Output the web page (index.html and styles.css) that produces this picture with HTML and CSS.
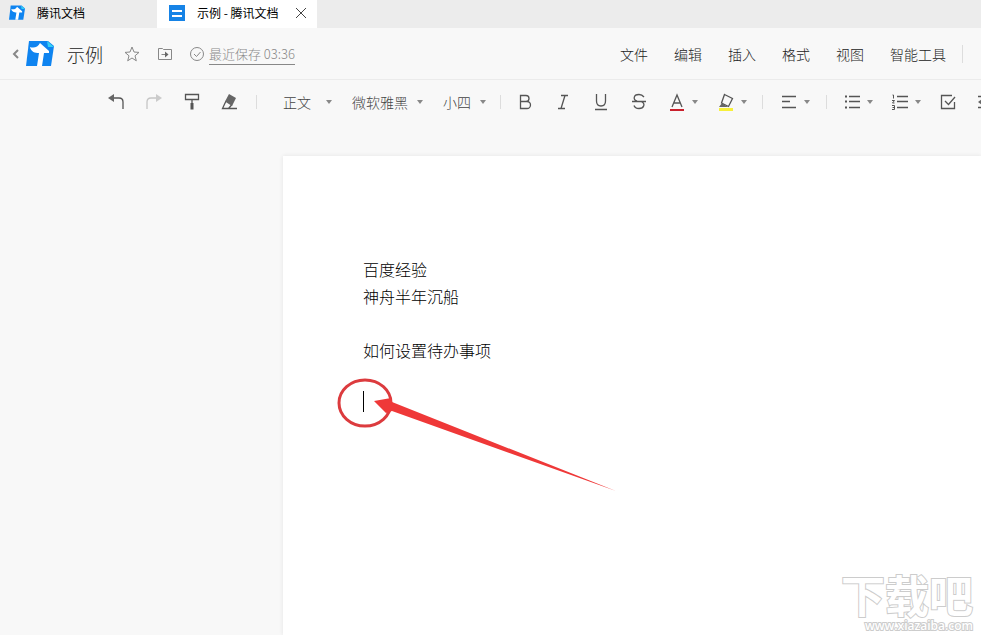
FILE: index.html
```html
<!DOCTYPE html>
<html lang="zh-CN">
<head>
    <meta charset="UTF-8">
    <meta name="viewport" content="width=device-width, initial-scale=1.0">
    <title>示例 - 腾讯文档</title>
    <link rel="stylesheet" href="styles.css">
</head>
<body>
    <svg class="defs" width="0" height="0">
        <symbol id="logo" viewBox="0 0 28 26">
            <path fill="#0f84f0" d="M3 0h19l6 5-3 20H0z"/>
            <path fill="#35d0f5" d="M21 0l7 6h-6z"/>
            <path fill="#fff" d="M4 6c4 1.500 8 0 10-4l9 8v2h-5l-2 13h-5l2-13C9 12 5 11 4 6z"/>
        </symbol>
    </svg>

    <nav class="tabs">
        <a class="tab" href="#"><svg class="tab-icon"><use href="#logo"/></svg>腾讯文档</a>
        <div class="tab active">
            <svg class="tab-icon" viewBox="0 0 16 16"><path fill="#1683e6" d="M0 0h16v16H0z"/><path stroke="#fff" stroke-width="2" d="M3 6h10M3 11h10"/></svg>
            <a href="#">示例 - 腾讯文档</a>
            <button class="close" aria-label="关闭"><svg width="10" height="10" viewBox="0 0 10 10"><path d="M0 0l10 10M10 0L0 10"/></svg></button>
        </div>
    </nav>

    <header class="header">
        <button class="back" aria-label="返回"><svg width="7" height="12" viewBox="0 0 7 12"><path d="M6 2L2 6l4 4" stroke-width="2"/></svg></button>
        <svg class="logo"><use href="#logo"/></svg>
        <h1>示例</h1>
        <button aria-label="收藏"><svg width="16" height="16" viewBox="0 0 16 16"><path d="M8 1l2 5 5 .4-4 3.400 1.300 5L8 12l-4.300 2.800 1.300-5-4-3.400L6 6z"/></svg></button>
        <button class="move" aria-label="移动到"><svg width="14" height="14" viewBox="0 0 14 14"><path d="M.5 1.500h4l1 1h8v10H.5zM3.500 7.500h6"/><path class="fill" d="M7 4.500l3.500 3L7 10.500z"/></svg></button>
        <svg class="saved-icon" width="14" height="14" viewBox="0 0 14 14"><circle cx="7" cy="7" r="6.500"/><path d="M4 7l2.500 2.500L10.500 5"/></svg>
        <a class="saved" href="#">最近保存 03:36</a>
        <nav class="menu">
            <a href="#">文件</a>
            <a href="#">编辑</a>
            <a href="#">插入</a>
            <a href="#">格式</a>
            <a href="#">视图</a>
            <a href="#">智能工具</a>
        </nav>
    </header>

    <div class="toolbar">
        <div class="group">
            <button aria-label="撤销"><svg viewBox="0 0 20 20"><path d="M6 6h7q4 0 4 4v7"/><path class="fill" d="M2 6l6-4v8z"/></svg></button>
            <button class="disabled" aria-label="重做" disabled><svg viewBox="0 0 20 20"><path d="M14 6H7q-4 0-4 4v7"/><path class="fill" d="M18 6l-6-4v8z"/></svg></button>
            <button aria-label="格式刷"><svg viewBox="0 0 20 20"><path d="M3.500 2.500h13v5h-13zM10 7.500v4"/><path d="M10 11v6.500" stroke-width="3"/></svg></button>
            <button aria-label="清除格式"><svg viewBox="0 0 20 20"><path d="M6 9l-3.500 7.500h6l3.500-4M8 16.500h9"/><path class="fill" d="M9 2l7 4-4 8-7-4.500z"/></svg></button>
        </div>
        <div class="group selects">
            <label class="select"><select class="style" aria-label="样式"><option>正文</option></select></label>
            <label class="select"><select aria-label="字体"><option>微软雅黑</option></select></label>
            <label class="select"><select aria-label="字号"><option>小四</option></select></label>
        </div>
        <div class="group format">
            <button aria-label="粗体"><svg viewBox="0 0 20 20"><path d="M5.500 3.500H11a3 3 0 0 1 0 6H5.500zM5.500 9.500H12a3.500 3.500 0 0 1 0 7H5.500z"/></svg></button>
            <button aria-label="斜体"><svg viewBox="0 0 20 20"><path d="M8 3.500h7M5 16.500h7M12 3.500l-4 13"/></svg></button>
            <button aria-label="下划线"><svg viewBox="0 0 20 20"><path d="M5.500 2v7q0 5 4.500 5t4.500-5V2M4 17.500h12"/></svg></button>
            <button aria-label="删除线"><svg viewBox="0 0 20 20"><path d="M15 5q-2-2.500-5-2.500C4 2.500 4 8 8 9M3 9.500h14M12 9.500c5 2 3 7-2 7q-4 0-5-3"/></svg></button>
            <button class="drop" aria-label="文字颜色"><svg viewBox="0 0 20 20"><path d="M5 15l5-12 5 12M7 11h6"/><path class="red" d="M3 17h14v2H3z"/></svg></button>
            <button class="drop" aria-label="突出显示"><svg viewBox="0 0 20 20"><path class="yellow" d="M3 16h14v3H3z"/><path d="M8.500 2.500l8 4-4 8-7-3.500z"/><path class="fill" d="M6 11l6 4H3z"/></svg></button>
        </div>
        <div class="group">
            <button class="drop" aria-label="对齐"><svg viewBox="0 0 20 20"><path d="M3 4.500h14M3 9.500h8M3 15.500h14"/></svg></button>
        </div>
        <div class="group lists">
            <button class="drop" aria-label="项目符号"><svg viewBox="0 0 20 20"><path d="M7 4.500h11M7 9.500h11M7 15.500h11"/><path d="M3 4.500h2M3 9.500h2M3 15.500h2" stroke-width="2"/></svg></button>
            <button class="drop" aria-label="编号"><svg viewBox="0 0 20 20"><path d="M7 4.500h11M7 9.500h11M7 15.500h11"/><path stroke-width="1" d="M2.500 3h1v3.500M2 8.500h2.500l-2 2.500h2M2 13.500h2.500v4H2M2.500 15.500h2"/></svg></button>
            <button aria-label="待办事项"><svg viewBox="0 0 20 20"><path d="M14 3.500H3.500v13h13V10M7 9l3.500 3.500L17 5"/></svg></button>
            <button aria-label="增加缩进"><svg viewBox="0 0 20 20"><path d="M3 4.500h14M9 9.500h8M3 15.500h14"/><path class="fill" d="M3 10l4-3v6z"/></svg></button>
        </div>
    </div>

    <main class="workspace">
        <article class="page">
            <p>百度经验</p>
            <p>神舟半年沉船</p>
            <p><br></p>
            <p>如何设置待办事项</p>
            <p class="current"><span class="caret"></span></p>
            <svg class="pointer" width="284" height="120" viewBox="0 0 284 120">
                <ellipse cx="29" cy="27" rx="26" ry="23"/>
                <path d="M38 25l17-3 1 4 224 89L56 35l-6 2z"/>
            </svg>
        </article>
    </main>

    <div class="watermark">
        <span class="name">下载吧</span>
        <span class="site">www.xiazaiba.com</span>
    </div>
</body>
</html>
```
FILE: styles.css
```css
* {
    box-sizing: border-box;
}
body {
    display: flex;
    flex-direction: column;
    min-height: 100vh;
    margin: 0;
    overflow: hidden;
    background: #f8f8f8;
    color: #222;
    font-family: "Noto Sans CJK SC", sans-serif;
    font-size: 14px;
    font-weight: 300;
}
a {
    color: inherit;
    text-decoration: none;
}
button {
    display: flex;
    align-items: center;
    flex: none;
    padding: 0;
    border: none;
    background: none;
    cursor: pointer;
}
svg {
    flex: none;
    fill: none;
    stroke: #888;
}
.defs {
    position: absolute;
}

/* browser tabs */
.tabs {
    display: flex;
    height: 28px;
    background: #ececec;
    color: #000;
    font-size: 12px;
    font-weight: 400;
}
.tab {
    display: flex;
    align-items: center;
    gap: 12px;
    width: 157px;
    padding: 0 9px 3px;
}
.tab.active {
    width: 160px;
    padding: 0 11px 3px 12px;
    background: #fff;
}
.tab-icon {
    width: 16px;
    height: 16px;
    stroke: none;
}
.close {
    margin-left: auto;
}
.close svg {
    stroke: #444;
}

/* title and menu */
.header {
    display: flex;
    align-items: center;
    height: 52px;
    padding: 1px 18px 0 12px;
    border-bottom: 1px solid #ebebeb;
}
.logo {
    width: 28px;
    height: 26px;
    margin-left: 7px;
    stroke: none;
}
h1 {
    margin: 0 21px 0 13px;
    color: #222;
    font-size: 18px;
    font-weight: 300;
    line-height: 24px;
}
.move {
    margin: 0 18px;
}
.saved {
    margin-left: 5px;
    border-bottom: 1px solid #888;
    color: #888;
    font-size: 13px;
    line-height: 20px;
}
.menu {
    display: flex;
    gap: 26px;
    margin-left: auto;
    padding-right: 16px;
    border-right: 1px solid #ddd;
    line-height: 18px;
}

/* toolbar */
.toolbar {
    display: flex;
    align-items: center;
    height: 44px;
    padding-left: 106px;
}
.toolbar svg {
    width: 20px;
    height: 20px;
    stroke: #555;
    stroke-width: 1.3;
}
.group {
    display: flex;
    align-items: center;
    flex: none;
    gap: 18px;
    height: 14px;
    padding: 0 16px;
    border-right: 1px solid #ddd;
}
.group:first-child {
    padding-left: 0;
}
.selects {
    gap: 20px;
    padding: 0 14px 0 26px;
}
.format {
    padding: 0 15px 0 14px;
}
.lists {
    gap: 17px;
    padding-left: 15px;
}
.select {
    display: flex;
    align-items: center;
    gap: 9px;
}
.select select {
    appearance: none;
    padding: 0;
    border: none;
    background: none;
    color: #444;
    font: inherit;
    line-height: 20px;
}
.select .style {
    width: 34px;
}
.drop {
    gap: 5px;
}
.select::after, .drop::after {
    content: "";
    border: 3px solid transparent;
    border-top: 4px solid #888;
    border-bottom: none;
}
.toolbar .disabled svg {
    opacity: 0.3;
}
svg .fill {
    fill: #666;
    stroke: none;
}
svg .red {
    fill: #c9202c;
    stroke: none;
}
svg .yellow {
    fill: #f7f03a;
    stroke: none;
}

/* document */
.workspace {
    display: flex;
    flex: 1;
    padding: 32px 0 0 283px;
}
.page {
    position: relative;
    flex: 1;
    padding: 100px 80px 0;
    background: #fff;
    box-shadow: 0 0 4px #e4e4e4;
    color: #000;
    font-size: 16px;
    line-height: 27px;
}
.page p {
    margin: 0;
}
.page .current {
    display: flex;
    align-items: center;
    height: 27px;
    margin-top: 24px;
}
.caret {
    width: 1px;
    height: 21px;
    background: #000;
}
.pointer {
    position: absolute;
    top: 220px;
    left: 53px;
}
.pointer ellipse {
    stroke: #dc3b3e;
    stroke-width: 3;
}
.pointer path {
    fill: #ef3838;
    stroke: none;
}

.watermark {
    position: absolute;
    right: 8px;
    bottom: 2px;
    display: flex;
    flex-direction: column;
    align-items: flex-end;
    color: #fff;
    font-weight: 700;
    -webkit-text-stroke: 2px #ccc;
    paint-order: stroke fill;
}
.name {
    font-size: 44px;
    line-height: 50px;
}
.site {
    font-family: "Open Sans", sans-serif;
    font-size: 12px;
    font-weight: 600;
    line-height: 14px;
}
```
